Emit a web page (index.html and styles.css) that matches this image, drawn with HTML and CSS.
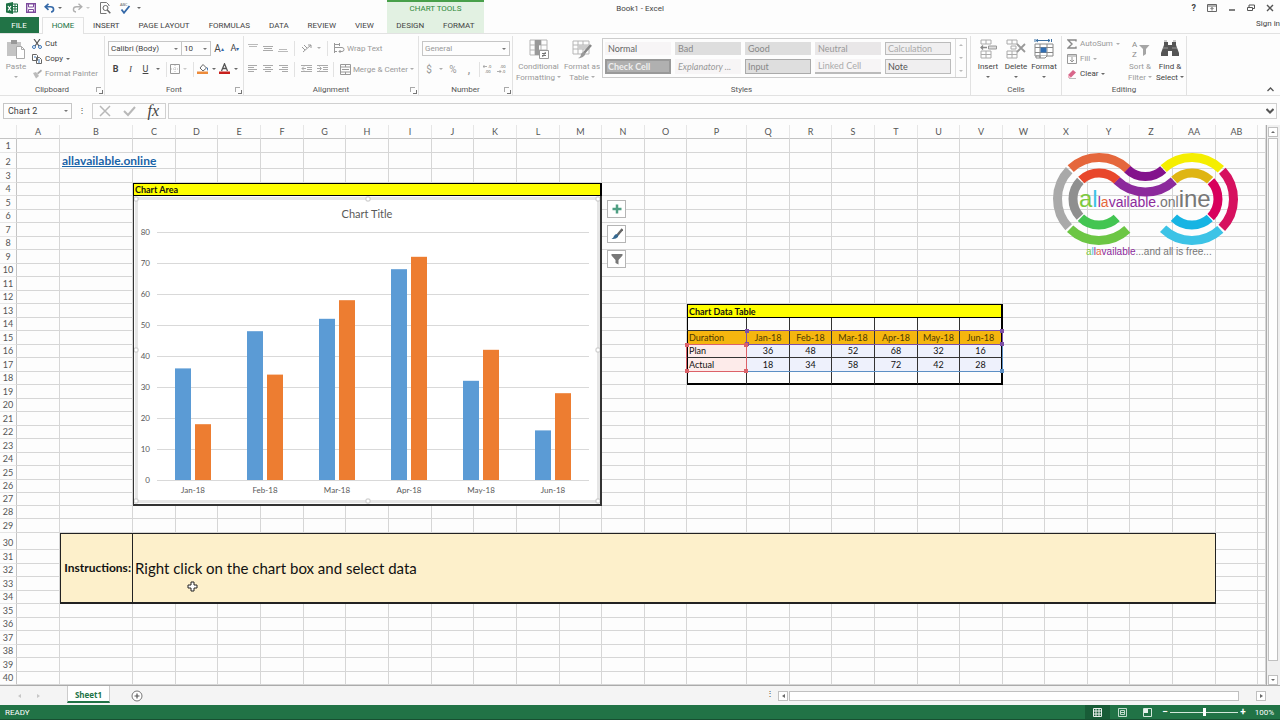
FILE: index.html
```html
<!DOCTYPE html>
<html lang="en">
<head>
    <meta charset="UTF-8">
    <meta name="viewport" content="width=device-width, initial-scale=1.0">
    <title>Book1 - Excel</title>
    <link rel="stylesheet" href="styles.css">
</head>
<body>
    <header class="titlebar">
        <div class="quick-access">
            <svg width="12" height="12" viewBox="0 0 12 12"><path d="M0 1.500 7 0v12L0 10.500z" fill="#1d7044"/><path d="M7 2h4.500v8H7M7 4.500h4M7 7h4M9 2v8" fill="none" stroke="#1d7044"/><path d="m2 4 3 4.500M5 4 2 8.500" stroke="#fff" stroke-width="1.200"/></svg>
            <button aria-label="Save"><svg width="10" height="10" viewBox="0 0 10 10"><path d="M.7.7h8.600v8.600H.7z" fill="#fff" stroke="#7c4a9c" stroke-width="1.400"/><path d="M2.500 1h5v3h-5zM2.500 6.500h5V9h-5z" fill="#fff" stroke="#7c4a9c"/></svg></button>
            <button class="gap-left" aria-label="Undo"><svg width="11" height="10" viewBox="0 0 11 10"><path d="M4.500.8 1.200 3.800l3.300 3M1.500 3.800h5c4 0 4 5 .5 5.200" fill="none" stroke="#3569a8" stroke-width="1.600"/></svg></button>
            <i class="arrow"></i>
            <button class="gap-left" aria-label="Redo"><svg width="11" height="10" viewBox="0 0 11 10"><path d="m6.500.8 3.300 3-3.300 3M9.500 3.800h-5c-4 0-4 5-.5 5.200" fill="none" stroke="#b0b0b0" stroke-width="1.400"/></svg></button>
            <i class="arrow pale"></i>
            <button class="gap-left" aria-label="Print Preview"><svg width="11" height="12" viewBox="0 0 11 12"><path d="M9 4V3L6.500.5h-6v11h6" fill="none" stroke="#777"/><circle cx="5.500" cy="6" r="2.500" fill="#fff" stroke="#666"/><path d="m7.300 8 3 3.200" stroke="#666" stroke-width="1.500"/></svg></button>
            <button class="gap-left" aria-label="Spelling"><svg width="12" height="12" viewBox="0 0 12 12"><text x="1" y="4" class="tiny">ABC</text><path d="m2.500 7.500 2.500 3.300L10.500 4" fill="none" stroke="#3569a8" stroke-width="1.800"/></svg></button>
            <i class="arrow wide"></i>
        </div>
        <h1 class="doc-title">Book1 - Excel</h1>
        <div class="window-buttons">
            <button aria-label="Help"><b>?</b></button>
            <button aria-label="Ribbon Display Options"><svg width="10" height="8" viewBox="0 0 10 8"><path d="M.5.5h9v7h-9zM.5 2h9M5 6.500V3.500M3.500 5 5 3.500 6.500 5" fill="none" stroke="#666"/></svg></button>
            <button aria-label="Minimize"><svg width="8" height="8" viewBox="0 0 8 8"><path d="M1 6h6" stroke="#555" stroke-width="1.500"/></svg></button>
            <button aria-label="Restore"><svg width="8" height="8" viewBox="0 0 8 8"><path d="M.5 3.500h5v3h-5zM2 3V1h5.500v3.500H6" fill="none" stroke="#555"/></svg></button>
            <button aria-label="Close"><svg width="8" height="8" viewBox="0 0 8 8"><path d="m1 1 6 6M7 1 1 7" stroke="#555" stroke-width="1.400"/></svg></button>
        </div>
    </header>

    <nav class="tabs">
        <a class="tab file" href="#">FILE</a>
        <a class="tab active" href="#">HOME</a>
        <a class="tab" href="#">INSERT</a>
        <a class="tab" href="#">PAGE LAYOUT</a>
        <a class="tab" href="#">FORMULAS</a>
        <a class="tab" href="#">DATA</a>
        <a class="tab" href="#">REVIEW</a>
        <a class="tab" href="#">VIEW</a>
        <div class="context-tabs">
            <div class="context-title">CHART TOOLS</div>
            <a class="tab" href="#">DESIGN</a>
            <a class="tab" href="#">FORMAT</a>
        </div>
        <a class="sign-in" href="#">Sign in</a>
    </nav>

    <section class="ribbon">
        <div class="group clipboard">
            <div class="group-body">
                <button class="big off"><svg width="20" height="20" viewBox="0 0 20 20"><path d="M1 3h14v14H1z" fill="#c4c4c4"/><path d="M5 1h6v4H5z" fill="#999"/><path d="M10.500 7.500h5l3 3v9h-8z" fill="#fff" stroke="#aaa"/><path d="M15.500 7.500v3h3" fill="none" stroke="#aaa"/></svg>Paste<i class="arrow"></i></button>
                <div class="stack">
                    <button><svg width="10" height="10" viewBox="0 0 10 10"><path d="m2 0 5 7M8 0 3 7" stroke="#555" stroke-width="1.200"/><circle cx="2" cy="8" r="1.500" fill="none" stroke="#3d76b5"/><circle cx="8" cy="8" r="1.500" fill="none" stroke="#3d76b5"/></svg>Cut</button>
                    <button><svg width="10" height="10" viewBox="0 0 10 10"><path d="M.5.5h4l1 1v5h-5zM4.500 3.500h3l2 2v4h-5z" fill="#fff" stroke="#666"/><path d="M6 6h2M6 8h2M2 3h2" stroke="#3d76b5"/></svg>Copy <i class="arrow"></i></button>
                    <button class="off"><svg width="10" height="10" viewBox="0 0 10 10"><path d="m5 4 4-3.500 1 1.500-4 3.500z" fill="#aaa"/><path d="m1 4 3-1 3 4-3 2.500z" fill="#bbb"/></svg>Format Painter</button>
                </div>
            </div>
            <div class="group-label">Clipboard<i class="launcher"></i></div>
        </div>

        <div class="group font">
            <div class="group-body rows">
                <div class="row">
                    <span class="combo font-name"><select aria-label="Font"><option>Calibri (Body)</option></select></span><span class="combo font-size"><select aria-label="Font Size"><option>10</option></select></span>
                    <button class="letter" aria-label="Increase Font Size">A<sup>▴</sup></button>
                    <button class="letter small" aria-label="Decrease Font Size">A<sup>▾</sup></button>
                </div>
                <div class="row">
                    <button class="letter"><b>B</b></button>
                    <button class="letter serif"><em>I</em></button>
                    <button class="letter"><u>U</u></button><i class="arrow"></i>
                    <span class="split"></span>
                    <button aria-label="Borders"><svg width="10" height="10" viewBox="0 0 10 10"><path d="M.5.5h9v9h-9z" fill="none" stroke="#999"/><path d="M5 1v8M1 5h8" stroke="#bbb" stroke-dasharray="1 1"/></svg></button><i class="arrow pale"></i>
                    <span class="split"></span>
                    <button aria-label="Fill Color"><svg width="12" height="12" viewBox="0 0 12 12"><path d="m3 5 3-3.500 3.500 3.500L6 8z" fill="#fff" stroke="#666"/><path d="M9.500 4q2.500 1 1 4z" fill="#3569a8"/><path d="M0 8.500h11V11H0z" fill="#ed8b3a"/></svg></button><i class="arrow"></i>
                    <button aria-label="Font Color"><svg width="12" height="12" viewBox="0 0 12 12"><path d="M2.500 8 5.500.8 8.500 8M3.500 5.500h4" fill="none" stroke="#555" stroke-width="1.300"/><path d="M0 8.500h11V11H0z" fill="#c8201c"/></svg></button><i class="arrow"></i>
                </div>
            </div>
            <div class="group-label">Font<i class="launcher"></i></div>
        </div>

        <div class="group alignment off">
            <div class="group-body rows">
                <div class="row">
                    <button aria-label="Top Align"><svg width="10" height="10" viewBox="0 0 10 10"><path d="M0 1.500h10M1 3.500h8" stroke="#bbb"/></svg></button>
                    <button aria-label="Middle Align"><svg width="10" height="10" viewBox="0 0 10 10"><path d="M0 3.500h10M1 5.500h8M0 7.500h10" stroke="#aaa"/></svg></button>
                    <button aria-label="Bottom Align"><svg width="10" height="10" viewBox="0 0 10 10"><path d="M1 6.500h8M0 8.500h10" stroke="#bbb"/></svg></button>
                    <span class="split"></span>
                    <button aria-label="Orientation"><svg width="11" height="10" viewBox="0 0 11 10"><path d="m2 9 8-7M7 2h3v3M1 4l3 3M3 2l3 3" fill="none" stroke="#999"/></svg></button><i class="arrow"></i>
                    <span class="split end"></span>
                    <button><svg width="11" height="10" viewBox="0 0 11 10"><path d="M0 1.500h5M0 4.500h8q2 0 2 2t-2 2H5M6.500 7 5 8.500 6.500 10M0 8.500h3M.5 0v10M5.500 0v3" fill="none" stroke="#999"/></svg>Wrap Text</button>
                </div>
                <div class="row">
                    <button aria-label="Align Left"><svg width="10" height="10" viewBox="0 0 10 10"><path d="M0 1.500h9M0 3.500h6M0 5.500h9M0 7.500h6" stroke="#aaa"/></svg></button>
                    <button aria-label="Center"><svg width="10" height="10" viewBox="0 0 10 10"><path d="M0 1.500h10M2 3.500h6M0 5.500h10M2 7.500h6" stroke="#aaa"/></svg></button>
                    <button aria-label="Align Right"><svg width="10" height="10" viewBox="0 0 10 10"><path d="M1 1.500h9M4 3.500h6M1 5.500h9M4 7.500h6" stroke="#aaa"/></svg></button>
                    <span class="split"></span>
                    <button aria-label="Decrease Indent"><svg width="11" height="10" viewBox="0 0 11 10"><path d="M0 1.500h11M6 3.500h5M6 5.500h5M0 7.500h11M5 4.500H1M3 2.500l-2 2 2 2" fill="none" stroke="#aaa"/></svg></button>
                    <button aria-label="Increase Indent"><svg width="11" height="10" viewBox="0 0 11 10"><path d="M0 1.500h11M6 3.500h5M6 5.500h5M0 7.500h11M0 4.500h4M2.500 2.500l2 2-2 2" fill="none" stroke="#aaa"/></svg></button>
                    <span class="split end"></span>
                    <button><svg width="11" height="11" viewBox="0 0 11 11"><path d="M.5.5h10v10H.5zM.5 3h10M.5 8h10M5.500.5V3M5.500 8v2.500M2 5.500h7" fill="none" stroke="#999"/></svg>Merge &amp; Center <i class="arrow"></i></button>
                </div>
            </div>
            <div class="group-label">Alignment<i class="launcher"></i></div>
        </div>

        <div class="group number off">
            <div class="group-body rows">
                <div class="row"><span class="combo number-format"><select aria-label="Number Format"><option>General</option></select></span></div>
                <div class="row">
                    <button class="symbol">$</button><i class="arrow"></i>
                    <button class="symbol">%</button>
                    <button class="symbol"><b>,</b></button>
                    <span class="split"></span>
                    <button aria-label="Increase Decimal"><svg width="12" height="10" viewBox="0 0 12 10"><text x="5" y="4" class="tiny">.0</text><text x="2" y="9" class="tiny">.00</text><path d="M4 2.500H0M1.500 1 0 2.500 1.500 4" fill="none" stroke="#999" stroke-width=".8"/></svg></button>
                    <button aria-label="Decrease Decimal"><svg width="12" height="10" viewBox="0 0 12 10"><text x="3" y="4" class="tiny">.00</text><text x="5" y="9" class="tiny">.0</text><path d="M0 7.500h4M2.500 6 4 7.500 2.500 9" fill="none" stroke="#999" stroke-width=".8"/></svg></button>
                </div>
            </div>
            <div class="group-label">Number<i class="launcher"></i></div>
        </div>

        <div class="group styles">
            <div class="group-body">
                <button class="big off"><svg width="20" height="20" viewBox="0 0 20 20"><path d="M1 1h17v15H1zM1 6h17M1 11h17M6 1v15M12 1v15" fill="none" stroke="#b5b5b5"/><path d="M6 1h6v5H6zM6 6h4v5H6zM6 11h7v5H6z" fill="#999"/><path d="M10.500 11.500h9v8h-9z" fill="#fff" stroke="#999"/><path d="M13 14.500h4M13 16.500h4M16.500 13l-3 5" stroke="#777"/></svg><span>Conditional<br>Formatting<i class="arrow"></i></span></button>
                <button class="big off"><svg width="20" height="20" viewBox="0 0 20 20"><path d="M1 2h16v13H1zM1 6h16M1 10h16M6 2v13M11 2v13" fill="none" stroke="#b5b5b5"/><path d="M6 6h11v4H6z" fill="#ccc"/><path d="m19 6-7 8" stroke="#888" stroke-width="2.500"/><path d="M12 13q2 1 1 3-3 4-7 3 3-1 3-4 1-2 3-2" fill="#999"/></svg><span>Format as<br>Table<i class="arrow"></i></span></button>
                <div class="gallery">
                    <div class="gallery-items">
                        <button class="style normal">Normal</button>
                        <button class="style bad">Bad</button>
                        <button class="style bad">Good</button>
                        <button class="style neutral">Neutral</button>
                        <button class="style calculation">Calculation</button>
                        <button class="style check">Check Cell</button>
                        <button class="style explain">Explanatory ...</button>
                        <button class="style input">Input</button>
                        <button class="style linked">Linked Cell</button>
                        <button class="style note">Note</button>
                    </div>
                    <div class="gallery-scroll"><i class="arrow up"></i><i class="arrow"></i><i class="arrow wide"></i></div>
                </div>
            </div>
            <div class="group-label">Styles</div>
        </div>

        <div class="group cells">
            <div class="group-body">
                <button class="big"><svg width="20" height="20" viewBox="0 0 20 20"><path d="M3 1h10v4H3zM8 1v4M3 12h10v7H3zM8 12v7M3 15.500h10" fill="none" stroke="#aaa"/><path d="M10.500 7h8v3h-8z" fill="#ddd" stroke="#999"/><path d="M9 8.500H3M5 6.500 3 8.500l2 2" fill="none" stroke="#888" stroke-width="1.300"/></svg>Insert<i class="arrow"></i></button>
                <button class="big"><svg width="20" height="20" viewBox="0 0 20 20"><path d="M1 1h10v4H1zM6 1v4M1 12h10v7H1zM6 12v7M1 15.500h10M5 7h5v3H5z" fill="none" stroke="#aaa"/><path d="m11 5 8 8M19 5l-8 8" stroke="#999" stroke-width="1.800"/></svg>Delete<i class="arrow"></i></button>
                <button class="big"><svg width="20" height="20" viewBox="0 0 20 20"><path d="M1 5h18v12H1zM1 8.500h18M1 13.500h18M6 5v12M13 5v12" fill="#fff" stroke="#888"/><path d="M2 17h4v2H2zM13 17l-2 2H6v-2" fill="#fff" stroke="#888"/><path d="M6.500 8.500h6v5h-6z" fill="#2f6db3"/><path d="M2 1.500h14M4 0 2 1.500 4 3M14 0l2 1.500L14 3M1 0v3M17.500 0v3" fill="none" stroke="#3b70a3"/></svg>Format<i class="arrow"></i></button>
            </div>
            <div class="group-label">Cells</div>
        </div>

        <div class="group editing">
            <div class="group-body">
                <div class="stack">
                    <button class="off"><svg width="10" height="10" viewBox="0 0 10 10"><path d="M9 2.500V1H1l4 4-4 4h8V7.500" fill="none" stroke="#888" stroke-width="1.400"/></svg>AutoSum <i class="arrow"></i></button>
                    <button class="off"><svg width="10" height="10" viewBox="0 0 10 10"><path d="M.5.5h9v9h-9zM.5 2h9M5 3v5M3 6l2 2 2-2" fill="none" stroke="#999"/></svg>Fill<i class="arrow"></i></button>
                    <button><svg width="10" height="10" viewBox="0 0 10 10"><path d="m1 6 5-5 3 2.500-5 5z" fill="#d8668a"/><path d="m1 6 3 2.500-1 .5H1z" fill="#f0b4c4"/><path d="M2 9.500h7" stroke="#bbb"/></svg>Clear<i class="arrow"></i></button>
                </div>
                <button class="big off"><svg width="20" height="20" viewBox="0 0 20 20"><text x="2" y="8" class="az">A</text><text x="2" y="18" class="az">Z</text><path d="M9 6h10.500L16 10v5l-3 2v-7z" fill="#a5a5a5"/></svg><span>Sort &amp;<br>Filter<i class="arrow"></i></span></button>
                <button class="big"><svg width="20" height="20" viewBox="0 0 20 20"><path d="M4 3h4v3h4V3h4v3l3 8v3h-7v-5H8v5H1v-3l3-8z" fill="#555"/><path d="M4 2h3M13 2h3M3 9h5M12 9h5" stroke="#999"/></svg><span>Find &amp;<br>Select<i class="arrow"></i></span></button>
            </div>
            <div class="group-label">Editing</div>
        </div>
        <button class="collapse" aria-label="Collapse the Ribbon"><svg width="7" height="5" viewBox="0 0 7 5"><path d="m.5 4 3-3 3 3" fill="none" stroke="#555" stroke-width="1.300"/></svg></button>
    </section>

    <section class="formula-bar">
        <span class="combo name-box"><input type="text" aria-label="Name Box" value="Chart 2"></span>
        <span class="dots">⋮</span>
        <div class="formula-buttons">
            <button aria-label="Cancel"><svg width="12" height="12" viewBox="0 0 12 12"><path d="m1 1 10 10M11 1 1 11" stroke="#b8b8b8" stroke-width="1.500"/></svg></button>
            <button aria-label="Enter"><svg width="13" height="12" viewBox="0 0 13 12"><path d="m1 6 4 4 7-8" fill="none" stroke="#b8b8b8" stroke-width="2"/></svg></button>
            <button class="fx">fx</button>
        </div>
        <div class="formula">
            <input type="text" aria-label="Formula Bar">
            <svg width="8" height="6" viewBox="0 0 8 6"><path d="m.5 1 3.500 3.500L7.500 1" fill="none" stroke="#555" stroke-width="2"/></svg>
        </div>
    </section>

    <main class="workspace">
        <div class="sheet">
            <table class="grid" id="grid"></table>
            <div id="ranges"></div>

            <div class="chart-buttons">
                <button aria-label="Chart Elements"><svg width="12" height="12" viewBox="0 0 12 12"><path d="M6 1.500v9M1.500 6h9" stroke="#4f9f83" stroke-width="2.500"/></svg></button>
                <button aria-label="Chart Styles"><svg width="12" height="12" viewBox="0 0 12 12"><path d="m11.500 1-5 6" stroke="#666" stroke-width="2.400"/><path d="M6 6q2 1 1 3-2 2.500-6.500 2 2-1 2.500-3 1-2 3-2" fill="#35688f"/></svg></button>
                <button aria-label="Chart Filters"><svg width="12" height="12" viewBox="0 0 12 12"><path d="M.5 1h11v1.500L7.500 7v4.500l-3-1.500V7l-4-4.500z" fill="#777"/></svg></button>
            </div>

            <svg class="logo" width="190" height="110" viewBox="0 0 190 110" role="img" aria-label="allavailable.online">
                <g class="arc outer">
                    <circle cx="49" cy="49" r="41.500" pathLength="360" transform="rotate(137 49 49)" stroke="#a9a9a9"/>
                    <circle cx="49" cy="49" r="41.500" pathLength="360" transform="rotate(-133 49 49)" stroke="#e5673c"/>
                    <circle cx="49" cy="49" r="41.500" pathLength="360" transform="rotate(47 49 49)" stroke="#6cc644"/>
                    <circle cx="95.500" cy=".5" r="41.500" pathLength="360" transform="rotate(47 95.500 .5)" stroke="#8c2a9c"/>
                    <circle cx="142" cy="49" r="41.500" pathLength="360" transform="rotate(-133 142 49)" stroke="#f5ee00"/>
                    <circle cx="142" cy="49" r="41.500" pathLength="360" transform="rotate(-43 142 49)" stroke="#d6115f"/>
                    <circle cx="142" cy="49" r="41.500" pathLength="360" transform="rotate(47 142 49)" stroke="#3cc3e6"/>
                </g>
                <g class="arc inner">
                    <circle cx="49" cy="49" r="26" pathLength="360" transform="rotate(137 49 49)" stroke="#8f8f8f"/>
                    <circle cx="49" cy="49" r="26" pathLength="360" transform="rotate(-133 49 49)" stroke="#e8472c"/>
                    <circle cx="49" cy="49" r="26" pathLength="360" transform="rotate(47 49 49)" stroke="#43c552"/>
                    <circle cx="95.500" cy=".5" r="26" pathLength="360" transform="rotate(47 95.500 .5)" stroke="#83128c"/>
                    <circle cx="142" cy="49" r="26" pathLength="360" transform="rotate(-133 142 49)" stroke="#dfb513"/>
                    <circle cx="142" cy="49" r="26" pathLength="360" transform="rotate(-43 142 49)" stroke="#d8005c"/>
                    <circle cx="142" cy="49" r="26" pathLength="360" transform="rotate(47 142 49)" stroke="#16b4e3"/>
                </g>
                <text x="29" y="57"><tspan class="large green">a</tspan><tspan class="large cyan">l</tspan><tspan class="purple">l</tspan><tspan class="orange">a</tspan><tspan class="purple">vailable.</tspan><tspan class="gray">onl</tspan><tspan class="large gray">ine</tspan></text>
                <text x="36" y="105" class="tagline"><tspan class="green">a</tspan><tspan class="cyan">l</tspan><tspan class="purple">l</tspan><tspan class="orange">a</tspan><tspan class="purple">vailable</tspan><tspan class="gray">...and all is free...</tspan></text>
            </svg>

            <svg class="cursor" width="11" height="11" viewBox="0 0 11 11"><path d="M4 1h3v3h3v3H7v3H4V7H1V4h3z" fill="#fff" stroke="#222"/></svg>
        </div>
        <div class="vscroll">
            <button aria-label="Scroll up"><i class="arrow up"></i></button>
            <div class="thumb"></div>
            <button aria-label="Scroll down"><i class="arrow"></i></button>
        </div>
    </main>

    <footer>
        <div class="sheet-bar">
            <span class="sheet-nav"><i class="arrow left"></i><i class="arrow right"></i></span>
            <a class="sheet-tab" href="#">Sheet1</a>
            <button class="add-sheet" aria-label="New sheet"><svg width="12" height="12" viewBox="0 0 12 12"><circle cx="6" cy="6" r="5" fill="#fff" stroke="#777"/><path d="M6 3.500v5M3.500 6h5" stroke="#555" stroke-width="1.200"/></svg></button>
            <span class="dots">⋮</span>
            <div class="hscroll">
                <button aria-label="Scroll left"><i class="arrow left"></i></button>
                <div class="thumb"></div>
                <button aria-label="Scroll right"><i class="arrow right"></i></button>
            </div>
        </div>
        <div class="status-bar">
            <span>READY</span>
            <div class="status-tools">
                <button class="view current" aria-label="Normal view"><svg width="9" height="9" viewBox="0 0 9 9"><path d="M.5.5h8v8h-8zM.5 3h8M.5 6h8M3 .5v8M6 .5v8" fill="none" stroke="#fff" stroke-width=".9"/></svg></button>
                <button class="view" aria-label="Page Layout view"><svg width="9" height="9" viewBox="0 0 9 9"><path d="M.5.5h8v8h-8zM2.500 2.500h4v4h-4zM3 4.500h3" fill="none" stroke="#d5e8dc" stroke-width=".9"/></svg></button>
                <button class="view" aria-label="Page Break view"><svg width="9" height="9" viewBox="0 0 9 9"><path d="M.5.5h8v8h-8z" fill="none" stroke="#d5e8dc"/><path d="M1 1h4v4H1z" fill="#e8f3ec"/></svg></button>
                <span class="zoom-sign">−</span>
                <input class="zoom-slider" type="range" min="0" max="200" value="100" aria-label="Zoom">
                <span class="zoom-sign">+</span>
                <span class="zoom-level">100%</span>
            </div>
        </div>
    </footer>

    <script src="sheet.js"></script>
</body>
</html>
```

FILE: styles.css
```css
* {
    margin: 0;
    padding: 0;
    box-sizing: border-box;
}

body {
    display: flex;
    flex-direction: column;
    height: 100vh;
    overflow: hidden;
    font-family: Roboto, "Open Sans", sans-serif;
    font-size: 8px;
    color: #444;
    background: #fdfdfd;
}

button,
input,
select {
    font: inherit;
    color: inherit;
    background: none;
    border: none;
    border-radius: 0;
    outline: none;
}

button {
    display: flex;
    align-items: center;
    white-space: nowrap;
}

a {
    color: inherit;
    text-decoration: none;
}

svg {
    flex: none;
    display: block;
}

.off {
    color: #999;
}

.tiny {
    font: 4px "Open Sans", sans-serif;
    fill: #555;
}

.arrow {
    display: inline-block;
    flex: none;
    margin: 0 3px;
    border: 2px solid transparent;
    border-top-color: currentColor;
    border-bottom: 0;
    opacity: 0.8;
}

.arrow.pale {
    color: #bbb;
}

.arrow.up {
    border-top: 0;
    border-bottom: 2px solid currentColor;
}

.arrow.left {
    border: 2px solid transparent;
    border-right: 3px solid currentColor;
    border-left: 0;
}

.arrow.right {
    border: 2px solid transparent;
    border-left: 3px solid currentColor;
    border-right: 0;
}

.arrow.wide {
    box-shadow: 0 -3px 0 -1px currentColor;
}

/* Title bar */
.titlebar {
    display: flex;
    align-items: center;
    height: 17px;
    padding: 0 6px 1px 6px;
}

.quick-access,
.window-buttons {
    display: flex;
    flex: 1;
    align-items: center;
}

.quick-access > svg {
    margin-right: 8px;
}

.quick-access .gap-left {
    margin-left: 8px;
}

.quick-access .arrow {
    margin: 0 2px 0 3px;
}

.quick-access .arrow.wide {
    margin-left: 6px;
}

.doc-title {
    font-size: 8px;
    font-weight: normal;
}

.window-buttons {
    justify-content: flex-end;
    gap: 11px;
}

.window-buttons b {
    font-size: 9px;
}

/* Tabs */
.tabs {
    display: flex;
    height: 17px;
    border-bottom: 1px solid #e2e2e2;
}

.tab {
    padding: 0 10px 0 9px;
    line-height: 17px;
}

.tab.file {
    width: 39px;
    margin-right: 3px;
    text-align: center;
    color: #fff;
    background: #217346;
}

.tab.active {
    width: 42px;
    height: 17px;
    padding: 0;
    text-align: center;
    color: #217346;
    background: #fdfdfd;
    border: 1px solid #e2e2e2;
    border-bottom: 0;
    line-height: 15px;
}

.context-tabs {
    position: relative;
    display: flex;
    width: 97px;
    justify-content: space-around;
    margin-left: 3px;
    background: #e2f1e2;
}

.context-tabs .tab {
    padding: 0 5px;
}

.context-title {
    position: absolute;
    bottom: 100%;
    width: 100%;
    height: 17px;
    border-top: 2px solid #48a04a;
    background: #e2f1e2;
    color: #2f8a3a;
    text-align: center;
    line-height: 13px;
}

.sign-in {
    margin-left: auto;
    line-height: 13px;
}

/* Ribbon */
.ribbon {
    display: flex;
    height: 62px;
    border-bottom: 1px solid #e2e2e2;
}

.group {
    display: flex;
    flex-direction: column;
    margin-top: 2px;
    border-right: 1px solid #e2e2e2;
}

.group-body {
    display: flex;
    flex: 1;
}

.group-body.rows {
    flex-direction: column;
    gap: 3px;
    padding-top: 3px;
}

.group-label {
    position: relative;
    text-align: center;
    line-height: 11px;
    color: #555;
}

.launcher {
    position: absolute;
    right: 3px;
    bottom: 3px;
    width: 5px;
    height: 5px;
    border: 1px solid #aaa;
    border-right: 0;
    border-bottom: 0;
}

.launcher::after {
    content: "";
    position: absolute;
    left: 2px;
    top: 2px;
    width: 3px;
    height: 3px;
    border: 1px solid #777;
    border-left: 0;
    border-top: 0;
}

.row {
    display: flex;
    align-items: center;
    height: 18px;
}

.stack {
    display: flex;
    flex-direction: column;
}

.stack button {
    gap: 3px;
    height: 15px;
}

.stack .arrow {
    margin: 0;
}

.big {
    flex-direction: column;
    padding-top: 3px;
    line-height: 11px;
}

.big svg {
    margin-bottom: 2px;
}

.big .arrow {
    margin: 4px 2px 0;
}

.big span .arrow {
    margin: 0 0 2px 2px;
}

.split {
    width: 1px;
    height: 15px;
    margin: 0 6px;
    background: #e2e2e2;
}

.combo {
    position: relative;
    display: block;
    height: 15px;
    border: 1px solid #c6c6c6;
}

.combo select,
.combo input {
    display: block;
    width: 100%;
    height: 100%;
    padding: 0 2px;
    appearance: none;
}

.combo::after {
    content: "";
    position: absolute;
    right: 3px;
    top: 6px;
    border: 2px solid transparent;
    border-top-color: #777;
    border-bottom: 0;
}

.clipboard {
    width: 105px;
}

.clipboard .big {
    width: 32px;
}

.font {
    width: 139px;
}

.font .row {
    padding-left: 3px;
}

.font-name {
    width: 74px;
}

.font-size {
    width: 29px;
    border-left: 0;
}

.letter {
    justify-content: center;
    width: 15px;
    font-size: 9px;
}

.letter.serif {
    font-family: "Liberation Serif", serif;
}

.font .row:first-child .letter {
    width: 16px;
    font-size: 10px;
}

.font .row:first-child .letter.small {
    font-size: 9px;
}

.letter sup {
    font-size: 6px;
    color: #3569a8;
}

.font .split {
    margin: 0 3px;
}

.alignment {
    width: 175px;
}

.alignment .row {
    gap: 5px;
    padding-left: 4px;
}

.alignment .row .arrow {
    margin: 0;
}

.alignment .split {
    margin: 0 1px;
}

.alignment .split.end {
    margin-left: auto;
}

.alignment .row button:last-child {
    gap: 2px;
    width: 84px;
}

.alignment button .arrow {
    margin-left: 4px;
}

.number {
    width: 94px;
}

.number .row {
    padding-left: 3px;
}

.number-format {
    width: 88px;
}

.symbol {
    justify-content: center;
    width: 14px;
    font-size: 10px;
}

.number .split {
    margin: 0 3px;
}

.number .row button + button {
    margin-left: 2px;
}

.styles {
    flex: 1;
}

.styles .group-body {
    padding-left: 2px;
}

.styles .big {
    width: 47px;
}

.styles .big + .big {
    width: 40px;
}

.gallery {
    display: flex;
    flex: 1;
    height: 40px;
    margin: 2px 3px 0 0;
    border: 1px solid #ccc;
}

.gallery-items {
    display: grid;
    flex: 1;
    grid-template-columns: repeat(5, 1fr);
    gap: 4px;
    padding: 3px 4px 3px 2px;
}

.style {
    padding: 0 3px;
    font-family: Lato, sans-serif;
    font-size: 9px;
    color: #999;
    background: #f7f5f6;
}

.style.normal {
    color: #666;
}

.style.bad {
    color: #888;
    background: #dedede;
}

.style.neutral {
    background: #e9e7e8;
}

.style.calculation {
    padding: 0 2px;
    border: 1px solid #bbb;
    color: #aaa;
    background: #f0eff0;
}

.style.check {
    padding: 0 1px;
    border: 2px solid #999;
    font-weight: bold;
    color: #eee;
    background: #b0b0b0;
}

.style.explain {
    font-style: italic;
}

.style.input {
    padding: 0 2px;
    border: 1px solid #aaa;
    color: #888;
    background: #dedede;
}

.style.linked {
    border-bottom: 2px solid #bbb;
    color: #aaa;
}

.style.note {
    padding: 0 2px;
    border: 1px solid #bbb;
    color: #555;
    background: #f0eff0;
}

.gallery-scroll {
    display: flex;
    flex-direction: column;
    align-items: center;
    justify-content: space-around;
    width: 11px;
    border-left: 1px solid #ddd;
    color: #aaa;
}

.cells {
    width: 91px;
}

.cells .group-body {
    padding-left: 3px;
}

.cells .big {
    width: 28px;
}

.editing {
    width: 125px;
}

.editing .group-body {
    padding-left: 5px;
}

.editing .stack {
    width: 58px;
}

.editing .big {
    width: 30px;
}

.az {
    font: 8px Roboto, sans-serif;
    fill: #888;
}

.collapse {
    align-items: flex-end;
    width: 93px;
    padding: 0 6px 3px 0;
    justify-content: flex-end;
}

/* Formula bar */
.formula-bar {
    display: flex;
    gap: 2px;
    height: 29px;
    padding: 7px 3px 6px;
}

.name-box {
    width: 69px;
    height: 16px;
    font-size: 9px;
}

.name-box input {
    padding-left: 4px;
}

.dots {
    width: 16px;
    text-align: center;
    line-height: 16px;
}

.formula-buttons {
    display: flex;
    justify-content: space-between;
    width: 74px;
    padding: 0 6px;
    border: 1px solid #d0d0d0;
}

.fx {
    font-family: "Liberation Serif", serif;
    font-size: 16px;
    font-style: italic;
}

.formula {
    display: flex;
    flex: 1;
    align-items: center;
    padding-right: 2px;
    border: 1px solid #d0d0d0;
}

.formula input {
    flex: 1;
}

/* Sheet */
.workspace {
    display: flex;
    flex: 1;
    min-height: 0;
    border-bottom: 1px solid #ababab;
}

.sheet {
    position: relative;
    flex: 1;
    overflow: hidden;
    border-right: 1px solid #ababab;
    font-family: Lato, sans-serif;
    font-size: 9px;
    line-height: 12px;
}

.grid {
    width: 100%;
    table-layout: fixed;
    border-collapse: separate;
    border-spacing: 0;
}

.grid tr {
    height: 14px;
}

.grid tr.short {
    height: 13px;
}

.grid tr.link-row {
    height: 16px;
}

.grid tr.tall {
    height: 17px;
}

.grid th,
.grid td {
    border-right: 1px solid #d6d6d6;
    border-bottom: 1px solid #d6d6d6;
    white-space: nowrap;
    overflow: hidden;
}

.grid th {
    font-weight: normal;
    color: #555;
    vertical-align: bottom;
}

.grid thead th {
    border-bottom-color: #c4c4c4;
    border-right-color: #e6e6e6;
}

.grid tbody th {
    border-right-color: #c4c4c4;
    border-bottom-color: #e6e6e6;
}

.grid td.site {
    padding-left: 2px;
    font-size: 12px;
    font-weight: bold;
}

.site a {
    color: #1a64a8;
    text-decoration: underline;
}

.grid td.heading {
    padding-left: 1px;
    border: 1px solid #000;
    border-width: 1px 2px 1px 1px;
    font-weight: bold;
    color: #111;
    background: #ff0;
    line-height: 11px;
}

.grid td.chart-cell {
    border: 2px solid #333;
    border-top: 0;
    border-left-width: 1px;
}

.grid td.box {
    border-color: #333;
    color: #111;
    text-align: center;
    vertical-align: bottom;
}

.grid td.first {
    padding-left: 1px;
    border-left: 1px solid #000;
    text-align: left;
}

.grid td.last {
    border-right: 2px solid #000;
}

.grid td.duration {
    background: #f5b60f;
    color: #4d3a00;
}

.grid td.name {
    background: #fdebea;
}

.grid td.value {
    background: #eef1fc;
}

.grid td.bottom {
    border-bottom: 2px solid #000;
}

.grid td.note-label,
.grid td.note-text {
    border: 1px solid #222;
    border-bottom-width: 2px;
    color: #111;
    background: #fdf0cb;
}

.grid td.note-label {
    font-size: 12px;
    font-weight: bold;
    text-align: right;
    padding-right: 1px;
}

.grid td.note-text {
    padding-left: 2px;
    border-left-width: 0;
    font-size: 15px;
}

.range {
    position: absolute;
    border: 1px solid currentColor;
}

.range.purple {
    color: #7d4fa5;
}

.range.red {
    color: #dc6168;
}

.range.blue {
    color: #5c8fc4;
}

.range i {
    position: absolute;
    width: 4px;
    height: 4px;
    background: currentColor;
}

.range .tl { left: -2px; top: -2px; }
.range .tr { right: -2px; top: -2px; }
.range .bl { left: -2px; bottom: -2px; }
.range .br { right: -2px; bottom: -2px; }

.range.blue .tl,
.range.blue .tr,
.range.blue .bl {
    display: none;
}

/* Chart */
.chart text {
    font-size: 8px;
    fill: #595959;
}

.chart .chart-title {
    font-size: 11px;
}

.chart-frame {
    fill: #fff;
    stroke: #e6e6e6;
    stroke-width: 3px;
}

.gridline {
    stroke: #d9d9d9;
}

.plan {
    fill: #5b9bd5;
}

.actual {
    fill: #ed7d31;
}

.handle {
    fill: #fff;
    stroke: #c4c4c4;
}

.chart-buttons {
    position: absolute;
    left: 607px;
    top: 75px;
    display: flex;
    flex-direction: column;
    gap: 7px;
}

.chart-buttons button {
    justify-content: center;
    width: 19px;
    height: 18px;
    background: #fff;
    border: 1px solid #b5b5b5;
}

.logo {
    position: absolute;
    left: 1050px;
    top: 25px;
    font-family: "Liberation Sans", sans-serif;
    font-size: 14px;
}

.arc {
    fill: none;
    stroke-width: 9px;
    stroke-dasharray: 87 273;
}

.logo .large { font-size: 24px; }
.logo .tagline { font-size: 10px; }
.logo .green { fill: #7cc93f; }
.logo .cyan { fill: #3cc3e6; }
.logo .purple { fill: #8c2a9c; }
.logo .orange { fill: #e5673c; }
.logo .gray { fill: #777; }

.cursor {
    position: absolute;
    left: 187px;
    top: 456px;
}

.vscroll {
    display: flex;
    flex-direction: column;
    width: 13px;
    padding: 2px 2px 0 1px;
    background: #f0f0f0;
}

.vscroll button,
.hscroll button {
    justify-content: center;
    width: 10px;
    height: 10px;
    background: #fff;
    border: 1px solid #c0c0c0;
}

.thumb {
    flex: 1;
    background: #fff;
    border: 1px solid #c0c0c0;
}

.vscroll .thumb {
    width: 10px;
    margin: 1px 0 14px;
}

/* Sheet tabs and status bar */
.sheet-bar {
    display: flex;
    height: 19px;
    background: #f4f4f4;
}

.sheet-nav {
    display: flex;
    align-items: center;
    gap: 10px;
    width: 67px;
    padding-left: 15px;
    color: #bbb;
}

.sheet-tab {
    width: 43px;
    height: 17px;
    border: 1px solid #ccc;
    border-width: 0 1px;
    border-bottom: 2px solid #217346;
    background: #fff;
    color: #217346;
    font-family: "Open Sans", sans-serif;
    font-weight: bold;
    text-align: center;
    line-height: 17px;
}

.add-sheet {
    margin-left: 21px;
}

.sheet-bar .dots {
    margin-left: auto;
}

.hscroll {
    display: flex;
    align-items: center;
    width: 488px;
    margin-right: 14px;
}

.hscroll .thumb {
    height: 10px;
    margin: 0 17px 0 1px;
}

.status-bar {
    display: flex;
    align-items: center;
    justify-content: space-between;
    height: 15px;
    padding: 0 6px 0 5px;
    border-bottom: 1px solid #174f31;
    background: #217346;
    color: #fff;
}

.status-tools {
    display: flex;
    align-items: center;
}

.view {
    justify-content: center;
    width: 25px;
    height: 14px;
}

.view.current {
    background: #185c37;
}

.zoom-sign {
    width: 10px;
    font-size: 10px;
    font-weight: bold;
    text-align: center;
    line-height: 14px;
}

.zoom-slider {
    width: 68px;
    height: 1px;
    appearance: none;
    background: #d5e8dc;
}

.zoom-slider::-webkit-slider-thumb {
    appearance: none;
    width: 3px;
    height: 8px;
    background: #fff;
}

.zoom-level {
    width: 26px;
    text-align: right;
}
```

FILE: sheet.js
```js
const cols = ['A', 'B', 'C', 'D', 'E', 'F', 'G', 'H', 'I', 'J', 'K', 'L', 'M', 'N', 'O', 'P', 'Q',
    'R', 'S', 'T', 'U', 'V', 'W', 'X', 'Y', 'Z', 'AA', 'AB', ''];
const colWidths = [43, 73, 43, 42, 43, 43, 42, 43, 43, 42, 43, 43, 42, 43, 42, 60, 43,
    42, 43, 43, 42, 43, 42, 43, 42, 43, 43, 42];
const rowCount = 40;

const months = ['Jan-18', 'Feb-18', 'Mar-18', 'Apr-18', 'May-18', 'Jun-18'];
const plan = [36, 48, 52, 68, 32, 16];
const actual = [18, 34, 58, 72, 42, 28];

// cells with content, keyed by address
const cells = {
    B2: { html: '<a href="#">allavailable.online</a>', cls: 'site', w: 2, h: 1 },
    C4: { html: 'Chart Area', cls: 'heading', w: 11, h: 1 },
    C5: { html: drawChart(), cls: 'chart-cell', w: 11, h: 23 },
    P13: { html: 'Chart Data Table', cls: 'heading', w: 7, h: 1 },
    B30: { html: 'Instructions:', cls: 'note-label', w: 1, h: 5 },
    C30: { html: 'Right click on the chart box and select data', cls: 'note-text', w: 25, h: 5 }
};

function addTableRow(row, label, values, cls, labelCls) {
    cells['P' + row] = { html: label, cls: 'box first ' + labelCls, w: 1, h: 1 };
    for (let i = 0; i < 6; i++) {
        cells[cols[16 + i] + row] = {
            html: values[i] === undefined ? '' : values[i],
            cls: 'box ' + cls + (i === 5 ? ' last' : ''),
            w: 1,
            h: 1
        };
    }
}

addTableRow(14, '', [], '', '');
addTableRow(15, 'Duration', months, 'duration', 'duration');
addTableRow(16, 'Plan', plan, 'value', 'name');
addTableRow(17, 'Actual', actual, 'value', 'name');
addTableRow(18, '', [], 'bottom', 'bottom');

function rowClass(row) {
    if (row === 2) return 'link-row';
    if (row === 30) return 'tall';
    return row % 2 === 0 || row === 27 ? 'short' : '';
}

function drawGrid() {
    const covered = new Set();
    let html = '<colgroup><col style="width: 17px">' +
        colWidths.map(w => `<col style="width: ${w}px">`).join('') + '<col></colgroup>';
    html += '<thead><tr><th></th>' + cols.map(c => `<th>${c}</th>`).join('') + '</tr></thead><tbody>';

    for (let row = 1; row <= rowCount; row++) {
        html += `<tr class="${rowClass(row)}"><th>${row}</th>`;
        cols.forEach((col, i) => {
            if (covered.has(i + ':' + row)) return;
            const cell = cells[col + row];
            if (!cell) {
                html += '<td></td>';
                return;
            }
            for (let r = 0; r < cell.h; r++) {
                for (let c = 0; c < cell.w; c++) covered.add((i + c) + ':' + (row + r));
            }
            html += `<td class="${cell.cls}" colspan="${cell.w}" rowspan="${cell.h}">${cell.html}</td>`;
        });
        html += '</tr>';
    }
    document.getElementById('grid').innerHTML = html + '</tbody>';
}

function drawChart() {
    const left = 23, right = 455, base = 284, step = 31, slot = 72;
    let svg = '<svg class="chart" width="466" height="308" viewBox="0 0 466 308">' +
        '<rect class="chart-frame" x="2.500" y="2.500" width="462" height="303"/>' +
        '<text class="chart-title" x="233" y="22" text-anchor="middle">Chart Title</text>';
    for (let i = 0; i <= 8; i++) {
        const y = base - i * step;
        svg += `<path class="gridline" d="M${left} ${y + 0.5}H${right}"/>` +
            `<text x="16" y="${y + 3}" text-anchor="end">${i * 10}</text>`;
    }
    months.forEach((month, i) => {
        const x = left + i * slot;
        const planHeight = plan[i] * step / 10;
        const actualHeight = actual[i] * step / 10;
        svg += `<rect class="plan" x="${x + 18}" y="${base - planHeight}" width="16" height="${planHeight}"/>` +
            `<rect class="actual" x="${x + 38}" y="${base - actualHeight}" width="16" height="${actualHeight}"/>` +
            `<text x="${x + 36}" y="${base + 13}" text-anchor="middle">${month}</text>`;
    });
    [[2, 3], [234, 3], [464, 3], [2, 154], [464, 154], [2, 305], [234, 305], [464, 305]].forEach(([x, y]) => {
        svg += `<rect class="handle" x="${x - 2}" y="${y - 2}" width="4" height="4" rx="1"/>`;
    });
    return svg + '</svg>';
}

// coloured frames around the ranges the chart reads from
function drawRange(from, to, color) {
    const rows = document.querySelectorAll('#grid tbody tr');
    const find = ([col, row]) => {
        const x = 17 + colWidths.slice(0, cols.indexOf(col)).reduce((a, b) => a + b, 0);
        return { x, y: rows[row - 1].offsetTop, w: colWidths[cols.indexOf(col)], h: rows[row - 1].offsetHeight };
    };
    const a = find(from);
    const b = find(to);
    document.getElementById('ranges').innerHTML +=
        `<div class="range ${color}" style="left: ${a.x - 1}px; top: ${a.y - 1}px; ` +
        `width: ${b.x + b.w - a.x + 1}px; height: ${b.y + b.h - a.y + 1}px">` +
        '<i class="tl"></i><i class="tr"></i><i class="bl"></i><i class="br"></i></div>';
}

drawGrid();
drawRange(['Q', 16], ['V', 17], 'blue');
drawRange(['Q', 15], ['V', 15], 'purple');
drawRange(['P', 16], ['P', 17], 'red');
```
